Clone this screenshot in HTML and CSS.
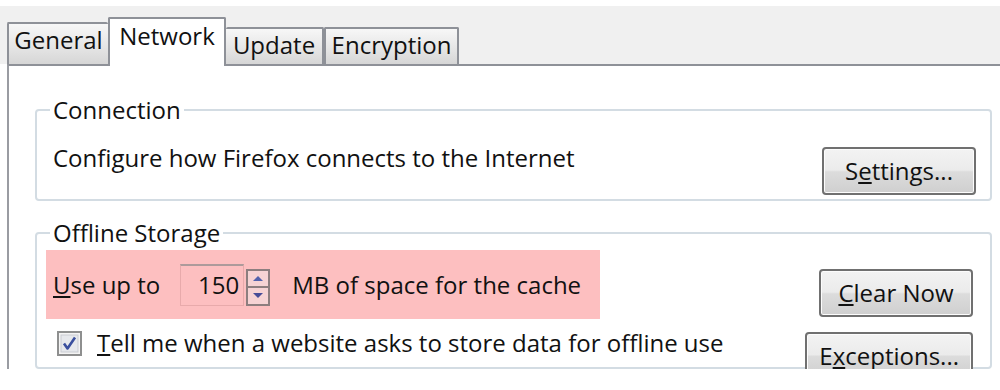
FILE: index.html
```html
<!DOCTYPE html>
<html lang="en">

<head>
  <meta charset="UTF-8">
  <title>Options - Advanced</title>
  <link rel="stylesheet" href="styles.css">
</head>

<body>
  <div class="dialog">
    <div class="tabs">
      <div class="tab tab-general">General</div>
      <div class="tab tab-selected">Network</div>
      <div class="tab tab-update">Update</div>
      <div class="tab tab-encryption">Encryption</div>
    </div>

    <div class="panel">
      <fieldset class="group group-connection">
        <legend>Connection</legend>
        <div class="connection-row">
          <span class="connection-text">Configure how Firefox connects to the Internet</span>
          <button class="btn btn-settings">S<u>e</u>ttings...</button>
        </div>
      </fieldset>

      <fieldset class="group group-offline">
        <legend>Offline Storage</legend>
        <div class="offline-body">
          <div class="offline-left">
            <div class="cache-row">
              <span><u>U</u>se up to</span>
              <div class="spin">
                <span class="spin-value">150</span>
                <div class="spin-arrows">
                  <span class="spin-btn"><span class="tri tri-up"></span></span>
                  <span class="spin-btn"><span class="tri tri-down"></span></span>
                </div>
              </div>
              <span class="cache-unit">MB of space for the cache</span>
            </div>
            <div class="check-row">
              <svg class="checkbox" width="25" height="25" viewBox="0 0 25 25">
                <rect x="1" y="1" width="23" height="23" fill="#f4f4f4" stroke="#8e8f8f" stroke-width="2" />
                <rect x="4" y="4" width="17" height="17" fill="#e6e8ec" stroke="#c9ccd2" stroke-width="1" />
                <path d="M7 12.5 L10.5 17.5 L18 6.5" fill="none" stroke="#3a4f9e" stroke-width="2.6" stroke-linejoin="round" />
              </svg>
              <span><u>T</u>ell me when a website asks to store data for offline use</span>
            </div>
          </div>
          <div class="offline-buttons">
            <button class="btn"><u>C</u>lear Now</button>
            <button class="btn">E<u>x</u>ceptions...</button>
          </div>
        </div>
      </fieldset>
    </div>
  </div>
</body>

</html>
```

FILE: styles.css
```css
body {
  margin: 0;
  background: #fff;
  font-family: "Open Sans", "Noto Sans", sans-serif;
  font-size: 24px;
  line-height: 32px;
  color: #111;
}

.dialog {
  padding-top: 6px;
}

/* tab strip */
.tabs {
  display: flex;
  align-items: flex-end;
  height: 58px;
  padding-left: 7px;
  background: #f0f0f0;
}

.tab {
  box-sizing: border-box;
  height: 37px;
  border: 2px solid #8e9198;
  border-bottom: none;
  border-radius: 2px 2px 0 0;
  background: linear-gradient(#f7f7f7, #e6e6e6 55%, #d6d6d6);
  text-align: center;
  line-height: 32px;
}

.tab-general {
  width: 101px;
  height: 42px;
  border-right: none;
}

.tab-selected {
  position: relative;
  width: 118px;
  height: 49px;
  margin-bottom: -2px;
  padding-top: 1px;
  background: #fff;
}

.tab-update {
  width: 98px;
  border-left: none;
}

.tab-encryption {
  width: 135px;
  border-left-width: 2px;
}

/* tab body */
.panel {
  margin-left: 7px;
  padding: 28px 8px 0 26px;
  border-top: 2px solid #8e9198;
  border-left: 2px solid #9a9ca2;
  background: #fff;
}

.group {
  margin: 0;
  min-width: 0;
  border: 2px solid #d3dce3;
  border-radius: 4px;
}

.group legend {
  padding: 0 3px;
  margin-left: -3px;
}

.group-connection {
  padding: 16px 14px 4px 16px;
}

.group-offline {
  margin-top: 16px;
  padding: 1px 17px 0 16px;
}

.connection-row {
  display: flex;
  justify-content: space-between;
  align-items: flex-start;
}

.btn-settings {
  margin-top: 5px;
  height: 51px;
}

/* push buttons */
.btn {
  box-sizing: border-box;
  min-width: 154px;
  height: 48px;
  padding: 0 12px;
  border: 2px solid #707070;
  border-radius: 4px;
  background: linear-gradient(#f3f3f3, #ebebeb 48%, #dcdcdc 52%, #cfcfcf);
  box-shadow: inset 0 0 0 1px #fcfcfc;
  font: inherit;
  color: #111;
}

/* offline storage */
.offline-body {
  display: flex;
  justify-content: space-between;
}

.offline-left {
  display: flex;
  flex-direction: column;
  align-items: flex-start;
}

.cache-row {
  display: flex;
  align-items: center;
  height: 69px;
  margin-left: -7px;
  padding: 0 19px 0 7px;
  background: #fdbfc0;
}

.spin {
  display: flex;
  align-items: flex-end;
  margin-left: 20px;
}

.spin-value {
  box-sizing: border-box;
  width: 64px;
  height: 42px;
  padding-right: 4px;
  border: 1px solid #e8aaab;
  border-top: 2px solid #ad9a9b;
  text-align: right;
  line-height: 38px;
}

.spin-arrows {
  display: flex;
  flex-direction: column;
  margin-left: 2px;
}

.spin-btn {
  box-sizing: border-box;
  display: flex;
  align-items: center;
  justify-content: center;
  width: 24px;
  height: 19px;
  border: 2px solid #8d7e7f;
  background: #f6d3d4;
}

.spin-btn + .spin-btn {
  border-top: none;
  height: 18px;
}

.tri {
  width: 0;
  height: 0;
  border-left: 5px solid transparent;
  border-right: 5px solid transparent;
}

.tri-up {
  border-bottom: 5px solid #5262ad;
}

.tri-down {
  border-top: 5px solid #474c97;
}

.cache-unit {
  margin-left: 22px;
}

.check-row {
  display: flex;
  align-items: center;
  gap: 15px;
  margin-top: 8px;
  padding-left: 4px;
}

.offline-buttons {
  display: flex;
  flex-direction: column;
  align-items: flex-end;
  gap: 15px;
  padding-top: 19px;
  margin-bottom: -12px;
}

.offline-buttons .btn + .btn {
  min-width: 163px;
  height: 47px;
}
```
